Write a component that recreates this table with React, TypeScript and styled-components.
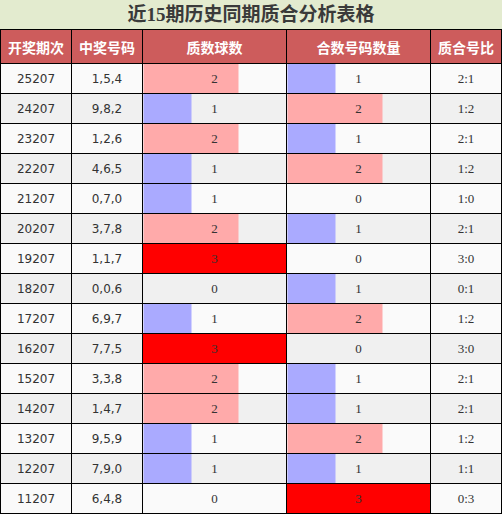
import React from "react";
import styled, { createGlobalStyle } from "styled-components";

const Global = createGlobalStyle`
  html, body { margin: 0; padding: 0; background: #ffffff; }
  body { font-family: "Liberation Serif", "Noto Sans CJK SC", serif; }
`;

const Table = styled.table`
  width: 501px;
  border-collapse: collapse;
  table-layout: fixed;
  border: 1px solid #000;
`;

const Title = styled.caption`
  height: 29px;
  line-height: 29px;
  background: #e3ebcf;
  color: #3a3a3a;
  font-family: "Liberation Serif", "Noto Sans CJK SC", serif;
  font-weight: bold;
  font-size: 19px;
  text-align: center;
  width: 502px;
`;

const HeadCell = styled.th`
  height: 33px;
  padding: 0;
  background: #cd5c5c;
  color: #ffffff;
  font-family: "Noto Sans CJK SC", sans-serif;
  font-weight: bold;
  font-size: 14px;
  border: 1px solid #000;
  border-top: none;
  text-align: center;
`;

const Row = styled.tr<{ $alt: boolean }>`
  background: ${(p) => (p.$alt ? "#f0f0f0" : "#fafafa")};
`;

const Cell = styled.td<{ $sans?: boolean }>`
  height: 29px;
  padding: 0;
  border: 1px solid #000;
  text-align: center;
  color: #333;
  font-size: ${(p) => (p.$sans ? "12px" : "13px")};
  font-family: ${(p) =>
    p.$sans ? '"DejaVu Sans", Verdana, sans-serif' : '"Liberation Serif", serif'};
`;

const barColor = (n: number) =>
  n === 3 ? "#ff0000" : n === 2 ? "#ffaaaa" : "#aaaaff";

const BarCell = styled(Cell)<{ $n: number }>`
  background-image: ${(p) =>
    p.$n > 0
      ? `linear-gradient(to right, ${barColor(p.$n)} 0, ${barColor(p.$n)} ${
          (p.$n / 3) * 100
        }%, transparent ${(p.$n / 3) * 100}%)`
      : "none"};
`;

const data: [string, string, number, number][] = [
  ["25207", "1,5,4", 2, 1],
  ["24207", "9,8,2", 1, 2],
  ["23207", "1,2,6", 2, 1],
  ["22207", "4,6,5", 1, 2],
  ["21207", "0,7,0", 1, 0],
  ["20207", "3,7,8", 2, 1],
  ["19207", "1,1,7", 3, 0],
  ["18207", "0,0,6", 0, 1],
  ["17207", "6,9,7", 1, 2],
  ["16207", "7,7,5", 3, 0],
  ["15207", "3,3,8", 2, 1],
  ["14207", "1,4,7", 2, 1],
  ["13207", "9,5,9", 1, 2],
  ["12207", "7,9,0", 1, 1],
  ["11207", "6,4,8", 0, 3],
];

export default function App() {
  return (
    <>
      <Global />
      <Table>
        <Title>近15期历史同期质合分析表格</Title>
        <colgroup>
          <col style={{ width: "71px" }} />
          <col style={{ width: "71px" }} />
          <col style={{ width: "144px" }} />
          <col style={{ width: "144px" }} />
          <col style={{ width: "71px" }} />
        </colgroup>
        <thead>
          <tr>
            <HeadCell>开奖期次</HeadCell>
            <HeadCell>中奖号码</HeadCell>
            <HeadCell>质数球数</HeadCell>
            <HeadCell>合数号码数量</HeadCell>
            <HeadCell>质合号比</HeadCell>
          </tr>
        </thead>
        <tbody>
          {data.map(([issue, nums, p, c], i) => (
            <Row key={issue} $alt={i % 2 === 1}>
              <Cell $sans>{issue}</Cell>
              <Cell $sans>{nums}</Cell>
              <BarCell $n={p}>{p}</BarCell>
              <BarCell $n={c}>{c}</BarCell>
              <Cell>
                {p}:{c}
              </Cell>
            </Row>
          ))}
        </tbody>
      </Table>
    </>
  );
}
